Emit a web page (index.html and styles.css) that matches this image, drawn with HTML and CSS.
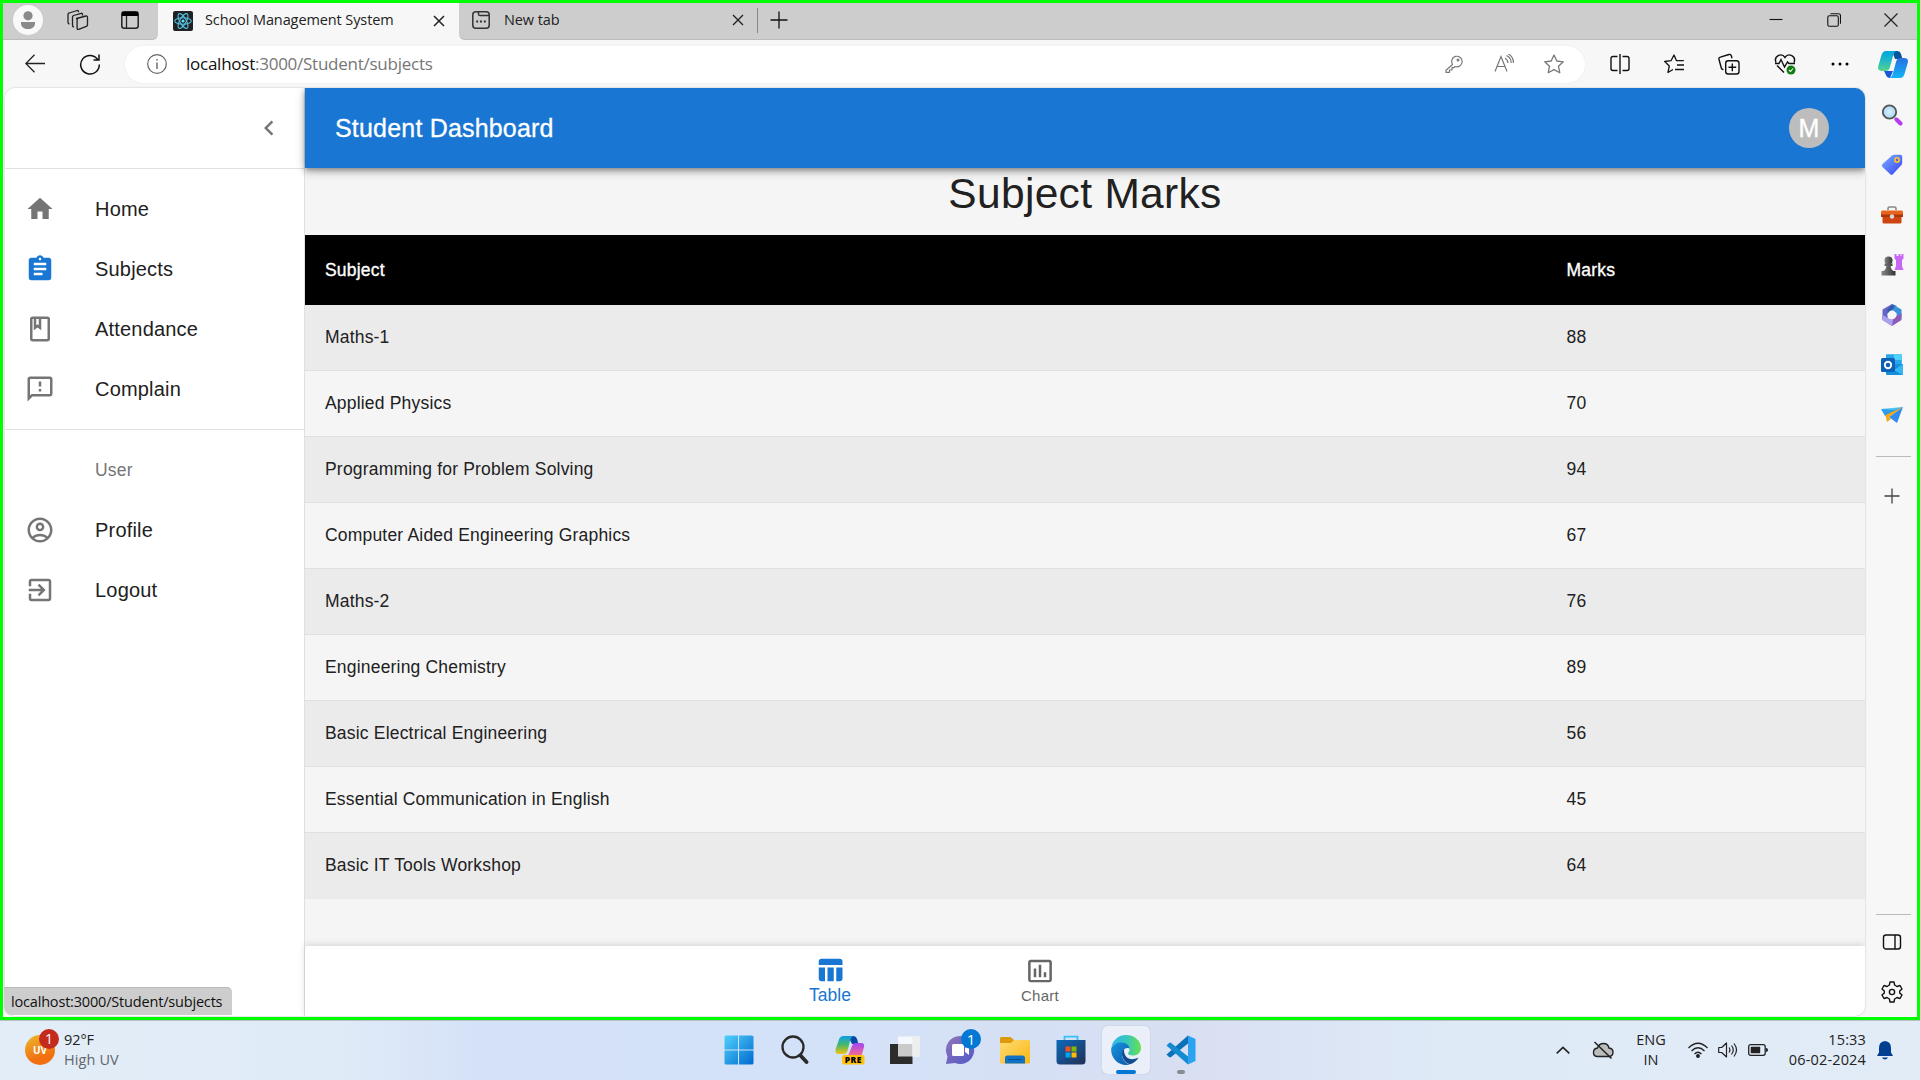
FILE: index.html
```html
<!DOCTYPE html>
<html lang="en">
<head>
<meta charset="utf-8">
<title>School Management System</title>
<link rel="stylesheet" href="styles.css">
</head>
<body>
<div class="window">
  <header class="titlebar">
    <div class="tab-tools">
      <svg class="person" viewBox="0 0 30 30"><circle cx="15" cy="15" r="15" fill="#f9f9f9"/><circle cx="15" cy="10.8" r="4.6" fill="#8a8a8a"/><path d="M8 17h14v1.500c0 3.500-3 5.500-7 5.500s-7-2-7-5.500z" fill="#8a8a8a"/></svg>
      <svg class="i22" viewBox="0 0 22 22" fill="none" stroke="#222" stroke-width="1.300" stroke-linejoin="round"><path d="M9.500 9.500 19 7q1.500-.3 1.500 1.200v7.500q0 1.200-1.200 1.600l-7.600 3q-1.600.6-1.600-1V10.800q0-1 1-1.300z"/><path d="M15.500 6.500V5.300q0-1.300-1.300-1L6.700 6.500q-1.200.4-1.200 1.700v8.300q0 1.300 1.500 1.500"/><path d="M11.500 3.300V2.500q0-1.200-1.300-1L2.200 4Q1 4.300 1 5.700v7.500q0 1.500 1.500 1.800"/></svg>
      <svg class="i18" viewBox="0 0 18 18"><rect x=".8" y=".8" width="16.400" height="16.400" rx="2.500" fill="none" stroke="#222" stroke-width="1.500"/><path d="M1 1h16v4H1z"/><path d="M5.500 5v12" stroke="#222" stroke-width="1.300"/></svg>
    </div>
    <div class="tab active">
      <svg class="i20" viewBox="0 0 20 20"><rect width="20" height="20" rx="2" fill="#202124"/><g fill="none" stroke="#53c1de" stroke-width="1.100"><ellipse cx="10" cy="10" rx="8.300" ry="3.200"/><ellipse cx="10" cy="10" rx="8.300" ry="3.200" transform="rotate(60 10 10)"/><ellipse cx="10" cy="10" rx="8.300" ry="3.200" transform="rotate(120 10 10)"/></g><circle cx="10" cy="10" r="1.600" fill="#61dafb"/></svg>
      <span class="tab-title t-school">School Management System</span>
      <svg class="i12" viewBox="0 0 12 12"><path d="M1 1l10 10M11 1 1 11" stroke="#222" stroke-width="1.500"/></svg>
    </div>
    <div class="tab idle">
      <svg class="i18" viewBox="0 0 18 18" fill="none" stroke="#333" stroke-width="1.500"><rect x=".8" y=".8" width="16.400" height="16.400" rx="3"/><path d="M6.500 1v2q0 1.600 1.600 1.600H17"/><path d="M4.200 10.500h2M8 10.500h2M11.800 10.500h2" stroke-width="2"/></svg>
      <span class="tab-title t-new">New tab</span>
      <svg class="i12" viewBox="0 0 12 12"><path d="M1 1l10 10M11 1 1 11" stroke="#222" stroke-width="1.400"/></svg>
    </div>
    <span class="tab-sep"></span>
    <svg class="i18 plus" viewBox="0 0 18 18"><path d="M9 .5v17M.5 9h17" stroke="#111" stroke-width="1.300"/></svg>
    <div class="controls">
      <svg viewBox="0 0 14 14"><path d="M.5 6.500h13" stroke="#111" stroke-width="1.100"/></svg>
      <svg viewBox="0 0 14 14" fill="none" stroke="#111" stroke-width="1.100"><rect x=".8" y="2.700" width="10.500" height="10.500" rx="1.500"/><path d="M3.500.7h8q2 0 2 2v8"/></svg>
      <svg viewBox="0 0 14 14"><path d="M.5.5l13 13M13.500.5l-13 13" stroke="#222" stroke-width="1.200"/></svg>
    </div>
  </header>

  <div class="toolbar">
    <div class="nav-tools">
      <svg class="i20" viewBox="0 0 20 20" fill="none" stroke="#222" stroke-width="1.300"><path d="M20 9.500H.8M9.500.8.8 9.500l8.700 8.700"/></svg>
      <svg class="i22" viewBox="0 0 22 22" fill="none" stroke="#111" stroke-width="1.500"><path d="M19 7a9.300 9.300 0 1 0 1.300 4.500M20 1.500V7h-5.500"/></svg>
    </div>
    <div class="address">
      <svg class="i20" viewBox="0 0 20 20" fill="none" stroke="#666" stroke-width="1.200"><circle cx="10" cy="10" r="9.300"/><path d="M10 8.500v6.500M10 5v1.600" stroke-width="1.400"/></svg>
      <span class="url"><b>localhost</b>:3000/Student/subjects</span>
      <div class="address-tools">
        <svg class="i18" viewBox="0 0 18 18" fill="none" stroke="#777" stroke-width="1.200" stroke-linejoin="round"><path d="M7.500 9.500 1 15.200V17.300h3.500V15H7v-2.300h2l1-1.200a5.300 5.300 0 1 0-2.500-2z"/><circle cx="13" cy="5" r=".9"/></svg>
        <svg class="i20" viewBox="0 0 20 20" fill="none" stroke="#777" stroke-width="1.200"><path d="M1 17.500 7 2.500l6 15M3 12.500h8M11 4q2.500 1.500 3 5M12.500 1.500Q17 3.500 17.300 9M14.500 0Q19.500 3 19.500 9"/></svg>
        <svg class="i20" viewBox="0 0 20 20" fill="none" stroke="#777" stroke-width="1.300" stroke-linejoin="round"><path d="m10 1 2.800 6 6.500.8-4.800 4.500 1.300 6.500L10 15.600l-5.800 3.200 1.300-6.500L.7 7.800 7.200 7z"/></svg>
      </div>
    </div>
    <div class="bar-tools">
      <svg class="i20" viewBox="0 0 20 20" fill="none" stroke="#111" stroke-width="1.400"><path d="M7.500 2.500H3q-2 0-2 2v10q0 2 2 2h4.500M12.500 2.500H17q2 0 2 2v10q0 2-2 2h-4.500M10 0v20"/></svg>
      <svg class="i20" viewBox="0 0 20 20" fill="none" stroke="#111" stroke-width="1.300" stroke-linejoin="round"><path d="M9 15.500l-5 3 1.300-6.500L.7 7.500l6.300-.8L10 1l2.500 5.700h7.300M13 11h7M11 15.500h9"/></svg>
      <svg class="i22" viewBox="0 0 22 22" fill="none" stroke="#111" stroke-width="1.400" stroke-linejoin="round"><rect x="7.700" y="7.700" width="13.300" height="13.300" rx="2.500"/><path d="M14.300 10.500v7.700M10.500 14.300h7.700M5.500 16.500q-1.700.2-2.200-1.500L1 6.500q-.5-1.800 1.300-2.300L11 1.500q1.800-.5 2.300 1.300l.7 2.500"/></svg>
      <svg class="i22" viewBox="0 0 22 22" fill="none" stroke="#111" stroke-width="1.400"><path d="M2 9.500C-.5 3.500 7.500-1 11 4.500 14.500-1 22.500 3.500 20 9.500M3 12.500l7 7M1 10.500h4l2-4 3.500 7.500 3-5 1.500 1.500h6"/><circle cx="17" cy="17" r="4.500" fill="#107c10" stroke="none"/><path d="m15 17 1.500 1.500 2.500-3" stroke="#fff" stroke-width="1.100"/></svg>
      <svg class="i20" viewBox="0 0 20 20"><circle cx="3" cy="10" r="1.500"/><circle cx="10" cy="10" r="1.500"/><circle cx="17" cy="10" r="1.500"/></svg>
    </div>
    <svg class="copilot" viewBox="0 0 30 27"><defs><linearGradient id="ca" x1="0" y1="0" x2="0" y2="1"><stop offset="0" stop-color="#00a5e0"/><stop offset=".5" stop-color="#22b8c4"/><stop offset="1" stop-color="#56d68a"/></linearGradient><linearGradient id="cb" x1="0" y1="0" x2="0" y2="1"><stop offset="0" stop-color="#2870e0"/><stop offset="1" stop-color="#12b4f8"/></linearGradient></defs><path d="M14 0h5q3 0 4 3l1.500 5H17z" fill="#07549c"/><path d="M6 20h9l-3 7q-3 0-4-3z" fill="#1658d8"/><path d="M8 0h10q-2 1-3 5l-3 11q-1 4-4 4H4q-5 0-3.700-5L3.500 4Q4.700 0 8 0z" fill="url(#ca)"/><path d="M22 7h4q5 0 3.700 5l-3.200 11q-1.200 4-4.500 4H12q2-1 3-5l3-11q1-4 4-4z" fill="url(#cb)"/></svg>
  </div>

  <div class="workarea">
    <div class="page">
      <aside class="drawer">
        <div class="drawer-head"><svg class="mi" viewBox="0 0 24 24"><path d="M15.410 7.410 14 6l-6 6 6 6 1.410-1.410L10.830 12z"/></svg></div>
        <nav class="menu">
          <a class="item"><svg class="mi" viewBox="0 0 24 24"><path d="M10 20v-6h4v6h5v-8h3L12 3 2 12h3v8z"/></svg><span>Home</span></a>
          <a class="item on"><svg class="mi" viewBox="0 0 24 24"><path d="M19 3h-4.180C14.400 1.840 13.300 1 12 1c-1.300 0-2.400.84-2.820 2H5c-1.100 0-2 .9-2 2v14c0 1.100.9 2 2 2h14c1.100 0 2-.9 2-2V5c0-1.100-.9-2-2-2zm-7 0c.55 0 1 .45 1 1s-.45 1-1 1-1-.45-1-1 .45-1 1-1zm2 14H7v-2h7v2zm3-4H7v-2h10v2zm0-4H7V7h10v2z"/></svg><span>Subjects</span></a>
          <a class="item"><svg class="mi" viewBox="0 0 24 24"><path d="M18 2H6c-1.100 0-2 .9-2 2v16c0 1.100.9 2 2 2h12c1.100 0 2-.9 2-2V4c0-1.100-.9-2-2-2zM9 4h2v5l-1-.75L9 9V4zm9 16H6V4h1v9l3-2.250L13 13V4h5v16z"/></svg><span>Attendance</span></a>
          <a class="item"><svg class="mi" viewBox="0 0 24 24"><path d="M20 2H4c-1.100 0-1.990.9-1.990 2L2 22l4-4h14c1.100 0 2-.9 2-2V4c0-1.100-.9-2-2-2zm0 14H5.170l-.59.59-.58.58V4h16v12zm-9-4h2v2h-2zm0-6h2v4h-2z"/></svg><span>Complain</span></a>
          <hr>
          <div class="subhead">User</div>
          <a class="item"><svg class="mi" viewBox="0 0 24 24"><path d="M12 2C6.480 2 2 6.480 2 12s4.480 10 10 10 10-4.480 10-10S17.520 2 12 2zM7.350 18.500C8.660 17.560 10.260 17 12 17s3.340.56 4.650 1.500C15.340 19.440 13.740 20 12 20s-3.340-.56-4.650-1.500zm10.790-1.380C16.450 15.800 14.320 15 12 15s-4.450.8-6.140 2.120C4.700 15.730 4 13.950 4 12c0-4.420 3.580-8 8-8s8 3.580 8 8c0 1.950-.7 3.730-1.860 5.120zM12 6c-1.930 0-3.500 1.570-3.500 3.500S10.070 13 12 13s3.500-1.570 3.500-3.500S13.930 6 12 6zm0 5c-.83 0-1.500-.67-1.500-1.500S11.170 8 12 8s1.500.67 1.500 1.500S12.830 11 12 11z"/></svg><span>Profile</span></a>
          <a class="item"><svg class="mi" viewBox="0 0 24 24"><path d="M10.090 15.590 11.500 17l5-5-5-5-1.410 1.410L12.670 11H3v2h9.670l-2.580 2.590zM19 3H5c-1.110 0-2 .9-2 2v4h2V5h14v14H5v-4H3v4c0 1.100.89 2 2 2h14c1.100 0 2-.9 2-2V5c0-1.100-.9-2-2-2z"/></svg><span>Logout</span></a>
        </nav>
      </aside>
      <main class="main">
        <div class="appbar"><span>Student Dashboard</span><span class="avatar">M</span></div>
        <h1>Subject Marks</h1>
        <div class="table">
          <div class="row head"><span>Subject</span><span>Marks</span></div>
          <div class="row"><span>Maths-1</span><span>88</span></div>
          <div class="row"><span>Applied Physics</span><span>70</span></div>
          <div class="row"><span>Programming for Problem Solving</span><span>94</span></div>
          <div class="row"><span>Computer Aided Engineering Graphics</span><span>67</span></div>
          <div class="row"><span>Maths-2</span><span>76</span></div>
          <div class="row"><span>Engineering Chemistry</span><span>89</span></div>
          <div class="row"><span>Basic Electrical Engineering</span><span>56</span></div>
          <div class="row"><span>Essential Communication in English</span><span>45</span></div>
          <div class="row"><span>Basic IT Tools Workshop</span><span>64</span></div>
        </div>
        <div class="bottom-nav">
          <a class="bn on"><svg class="mi" viewBox="0 0 24 24"><path d="M10 10.020h5V21h-5V10.020zM17 21h3c1.100 0 2-.9 2-2v-9h-5v11zm3-18H5c-1.100 0-2 .9-2 2v3h19V5c0-1.100-.9-2-2-2zM3 19c0 1.100.9 2 2 2h3V10H3v9z"/></svg><span>Table</span></a>
          <a class="bn"><svg class="mi" viewBox="0 0 24 24"><path d="M9 17H7v-7h2v7zm4 0h-2V7h2v10zm4 0h-2v-4h2v4zm2.500 2.100h-15V5h15v14.100zm0-16.100h-15c-1.100 0-2 .9-2 2v14c0 1.100.9 2 2 2h15c1.100 0 2-.9 2-2V5c0-1.100-.9-2-2-2z"/></svg><span>Chart</span></a>
        </div>
      </main>
    </div>
    <aside class="rail">
      <i><svg class="i22" viewBox="0 0 22 22"><defs><radialGradient id="mg"><stop offset="0" stop-color="#d8f0ff"/><stop offset="1" stop-color="#a9d8f5"/></radialGradient></defs><path d="m14 14 2 2" stroke="#777" stroke-width="2"/><path d="m15.500 15.500 4 4" stroke="#b63bf3" stroke-width="4" stroke-linecap="round"/><circle cx="8.500" cy="8" r="6.700" fill="url(#mg)" stroke="#555" stroke-width="1.800"/></svg></i>
      <i><svg class="i22" viewBox="0 0 22 22"><defs><linearGradient id="tg" x1="0" y1="0" x2="1" y2="1"><stop offset="0" stop-color="#78b5ff"/><stop offset="1" stop-color="#3a3cf5"/></linearGradient></defs><path d="M11 1.500Q12 .8 13 .8h6.500q1.700 0 1.700 1.700V9q0 1-.8 2l-8.500 9.300q-1.300 1.200-2.600 0L1.500 13Q0 11.500 1.500 10z" fill="url(#tg)"/><circle cx="16" cy="6" r="2.200" fill="#5a68e8" stroke="#ffc928" stroke-width="1.600"/></svg></i>
      <i><svg class="i24" viewBox="0 0 24 24"><path d="M8 7V5.500Q8 4 9.500 4h5Q16 4 16 5.500V7" fill="none" stroke="#888" stroke-width="1.600"/><path d="M1 9q0-1.500 1.500-1.500h19Q23 7.500 23 9v4H1z" fill="#e8641c"/><path d="M2.500 13h19v6q0 1.500-1.500 1.500H4Q2.500 20.500 2.500 19z" fill="#cf4510"/><path d="M1 11.500h22v2.500H1z" fill="#a9360c"/><circle cx="12" cy="13.500" r="2.200" fill="#d8d8d8"/></svg></i>
      <i><svg class="i24" viewBox="0 0 24 24"><defs><linearGradient id="pg" x1="0" x2="1"><stop offset="0" stop-color="#888"/><stop offset="1" stop-color="#333"/></linearGradient></defs><path d="M14.500 1h2v2h2V1h2v2h1V1H23.500v4.500L22 7v6l1.500 4h-9L16 13V7l-1.500-1.500z" fill="#c866f5"/><circle cx="8.500" cy="7.500" r="4" fill="url(#pg)"/><path d="M4.500 10.500h8V13h-1.800q0 3.500 3 5H15.500v4.500h-14V18h1.800q3-1.500 3-5H4.500z" fill="url(#pg)"/></svg></i>
      <i><svg class="i22" viewBox="0 0 22 22"><path d="M11 0 1.500 5.500V15L7 18.500 6.500 9l9.500-7z" fill="#6765c8"/><path d="M11 0l9.500 5.500V14l-5-1.500V9L9 5.500z" fill="#3a92dc"/><path d="m6.500 5.500 4.500-5 3 1.700L10 7.500 6.500 10z" fill="#315bad"/><path d="M20.500 9v7L11 22l-9.500-6V12l6.500 4 7.500-4z" fill="#8c5bb8"/><path d="M1.500 11v5l9.500 6 1-6-5-2z" fill="#a8a2ef"/><circle cx="11" cy="11" r="4.400" fill="#f7f7f7"/></svg></i>
      <i><svg class="i22" viewBox="0 0 22 22"><path d="M5 1q0-.8.8-.8H20q.8 0 .8.800v9H5z" fill="#28a8ea"/><path d="M13 .2h7q.8 0 .8.800v5H13z" fill="#50d0ff"/><path d="M5 10h17v10q0 1-1 1H6q-1 0-1-1z" fill="#1490df"/><path d="m22 10-9 6 8.500 5q.5 0 .5-1z" fill="#35b8f1"/><rect y="4" width="14" height="14" rx="1.500" fill="#0a62b8"/><circle cx="7" cy="11" r="3.200" fill="none" stroke="#fff" stroke-width="1.900"/></svg></i>
      <i><svg class="i22" viewBox="0 0 22 22"><path d="M0 5 22 3 13 9.500z" fill="#4ac5f5"/><path d="m0 5 13 1L22 3 4 12z" fill="#2d9ce8"/><path d="m22 3-6 16-8-6z" fill="#2f8bee"/><path d="M22 3 4.500 11l1.500 7 4-3-2-2z" fill="#f5a613"/></svg></i>
      <hr>
      <i class="rail-plus"><svg viewBox="0 0 16 16"><path d="M8 .5v15M.5 8h15" stroke="#444" stroke-width="1.300"/></svg></i>
      <hr class="low">
      <i><svg class="i20" viewBox="0 0 20 20" fill="none" stroke="#111" stroke-width="1.400"><rect x="1.500" y="3" width="17" height="14" rx="2.500"/><path d="M13 3v14"/></svg></i>
      <i><svg class="i22" viewBox="0 0 22 22" fill="none" stroke="#111" stroke-width="1.400" stroke-linejoin="round"><circle cx="11" cy="11" r="2.600"/><path d="m9 1-.6 3L6 5.500 3 4.500 1 8l2.300 2v2L1 14l2 3.500 3-1L8.400 18l.6 3h4l.6-3 2.400-1.500 3 1 2-3.500-2.300-2v-2L21 8l-2-3.500-3 1L13.600 4 13 1z"/></svg></i>
    </aside>
  </div>
  <div class="status">localhost:3000/Student/subjects</div>
</div>

<footer class="taskbar">
  <div class="weather">
    <span class="uv">UV<em>1</em></span>
    <span class="wtext"><span>92°F</span><span class="dim">High UV</span></span>
  </div>
  <div class="apps">
    <i><svg viewBox="0 0 30 30"><defs><linearGradient id="wg" x1="0" y1="0" x2="1" y2="1"><stop offset="0" stop-color="#4fd0fb"/><stop offset="1" stop-color="#0069cf"/></linearGradient></defs><path d="M.5 2q0-1.500 1.500-1.500h12v14H.5zM15 .5h13q1.500 0 1.500 1.500v12.500H15zM.5 15.500H14v14H2Q.5 29.500.5 28zM15 15.500h14.500V28q0 1.500-1.500 1.500H15z" fill="url(#wg)"/></svg></i>
    <i><svg viewBox="-1 0 30 30" fill="none" stroke="#2a2a2a"><circle cx="13" cy="12" r="10.500" stroke-width="2.300"/><path d="m20.500 20.500 6 6.500" stroke-width="3.800" stroke-linecap="round"/></svg></i>
    <i><svg class="pre-icon" viewBox="-1 0 31 30"><defs><linearGradient id="pa" x1="0" y1="0" x2="0" y2="1"><stop offset="0" stop-color="#0a9fe8"/><stop offset=".5" stop-color="#4bb86a"/><stop offset="1" stop-color="#f2c40c"/></linearGradient><linearGradient id="pb" x1="0" y1="0" x2="0" y2="1"><stop offset="0" stop-color="#a148f5"/><stop offset="1" stop-color="#fb6b8b"/></linearGradient></defs><path d="M13 1h5q3 0 4 3l1.500 5H17z" fill="#0a48a8"/><path d="M8.500 1H18q-2 1-3 5l-2.500 10q-1 3-4 3H4q-4.500 0-3.300-5L4 4.500Q5 1 8.500 1z" fill="url(#pa)"/><path d="M21 8h5q4 0 3 4l-2.500 9H13l4-10q1-3 4-3z" fill="url(#pb)"/><rect x="7" y="20" width="22.500" height="9.500" rx="2" fill="#ffc20e"/><text x="18.300" y="28" text-anchor="middle" class="pre">PRE</text></svg></i>
    <i><svg viewBox="0 0 30 30"><path d="M0 9h22.500v20H0z" fill="#2c2c2c"/><path d="M8 1.500h22v20H8z" fill="#fff" fill-opacity=".75"/><path d="M22.500 1.500H30v20h-7.500z" fill="#eee"/></svg></i>
    <i class="badged"><svg viewBox="0 0 30 30"><defs><linearGradient id="tm" x1="0" y1="0" x2="1" y2="1"><stop offset="0" stop-color="#9275b8"/><stop offset="1" stop-color="#5059c9"/></linearGradient></defs><path d="M15 1a14 14 0 1 1-5 27L1 29l1.500-7.500A14 14 0 0 1 15 1z" fill="url(#tm)"/><rect x="7" y="9" width="12" height="12" rx="1.500" fill="#fff"/><path d="m20 13 4-3v10l-4-3z" fill="#fff"/></svg><em>1</em></i>
    <i><svg viewBox="0 0 30 30"><defs><linearGradient id="fg" x1="0" y1="0" x2="1" y2="1"><stop offset="0" stop-color="#ffdc73"/><stop offset="1" stop-color="#fbb614"/></linearGradient></defs><path d="M0 3.500Q0 2 1.500 2h9L14 5h4v6H0z" fill="#dd9a0a"/><path d="M0 8h11l3-3h14.500Q30 5 30 6.500V27q0 1.500-1.500 1.500h-27Q0 28.500 0 27z" fill="url(#fg)"/><path d="M5 28.500V23q0-2.500 2.500-2.500h15Q25 20.500 25 23v5.500z" fill="#1072c4"/><path d="M8.500 24.500h13" stroke="#084f92"/></svg></i>
    <i><svg viewBox="0 0 30 30"><defs><linearGradient id="sg" x1="0" y1="0" x2="1" y2="1"><stop offset="0" stop-color="#0c6abb"/><stop offset="1" stop-color="#232f55"/></linearGradient></defs><path d="M8.500 6V1.700h13V6" fill="none" stroke="#33c4f5" stroke-width="1.800"/><path d="M.5 5h29v21q0 3.500-3.500 3.500H4Q.5 29.500.5 26z" fill="url(#sg)"/><path d="M9.500 11.500h5v5h-5z" fill="#f25022"/><path d="M15.500 11.500h5v5h-5z" fill="#7fba00"/><path d="M9.500 17.500h5v5h-5z" fill="#00a4ef"/><path d="M15.500 17.500h5v5h-5z" fill="#ffb900"/></svg></i>
    <i class="active-app"><svg viewBox="0 0 30 30"><defs><linearGradient id="eg" x1="0" x2="1"><stop offset="0" stop-color="#2fb8e8"/><stop offset=".5" stop-color="#35c6c0"/><stop offset="1" stop-color="#67e24a"/></linearGradient><linearGradient id="eb" x1="0" y1="0" x2="1" y2="1"><stop offset="0" stop-color="#1595e0"/><stop offset="1" stop-color="#0c58a8"/></linearGradient></defs><path d="M.5 12C2 4.500 8 0 15 0c9 0 15 6 15 13 0 5-4 7.500-8 7.500-3 0-5-1-5-2 0-1 1.500-1.500 1.500-4C18.500 11 14 8 9.500 8S2 10 .5 12z" fill="url(#eg)"/><path d="M.3 13C2 9.500 6 7.500 10 7.500c5 0 8.500 3 8.500 6-4-2-7.500 2-7.500 6 0 5 3.500 9 8 10C8 32-1 23 .3 13z" fill="url(#eb)"/><path d="M13 14c-2 1.500-2 3-2 5 0 5 4 9.500 8 10.300 4-1.100 7-3.800 8.500-6.800-8 4-15 .5-14.500-8.500z" fill="#104c92"/></svg></i>
    <i class="open-app"><svg viewBox="0 0 30 30"><path d="M22 .5 29.500 4v22L22 29.500z" fill="#2ba3f0"/><path d="M22 .5v8L4.500 22.500 3 22 .5 19.500z" fill="#0b72b8"/><path d="M.5 10.500 3 8l1.500-.5L22 21.500v8z" fill="#148ad2"/></svg></i>
  </div>
  <div class="tray">
    <svg class="t-chev" viewBox="0 0 14 8"><path d="m.7 7.300 6.300-6 6.300 6" fill="none" stroke="#222" stroke-width="1.600"/></svg>
    <svg class="t-cloud" viewBox="0 0 22 18"><path d="M5.500 15.500q-4 0-4-4T5.500 7Q7 2.500 11.500 2.500T17 7q4 .5 4 4.300t-4 4.200z" fill="#bdbdbd" stroke="#222" stroke-width="1.400"/><path d="m2.500 1 17 16.500" stroke="#222" stroke-width="1.500"/></svg>
    <span class="lang"><span>ENG</span><span>IN</span></span>
    <svg class="t-wifi" viewBox="0 0 20 16" fill="none" stroke="#222" stroke-width="1.300"><path d="M.5 6q9.500-9.500 19 0M3.500 9q6.500-6.500 13 0M6.500 12q3.500-3.500 7 0"/><circle cx="10" cy="14" r="1.300" fill="#222"/></svg>
    <svg class="t-vol" viewBox="0 0 20 16" fill="none" stroke="#222" stroke-width="1.200" stroke-linejoin="round"><path d="M.7 5.500h3L8.500 1v14l-4.800-4.500h-3zM11 5.500q1.800 2.500 0 5M13.500 3.500q3.500 4.500 0 9M16 1.500q5 6.500 0 13"/></svg>
    <svg class="t-bat" viewBox="0 0 20 12"><rect x=".7" y=".7" width="16.500" height="10.600" rx="2" fill="none" stroke="#222" stroke-width="1.300"/><rect x="2.700" y="2.700" width="9.500" height="6.600" rx=".7" fill="#222"/><path d="M18 4q2 0 2 2t-2 2z" fill="#222"/></svg>
    <span class="clock"><span>15:33</span><span>06-02-2024</span></span>
    <svg class="t-bell" viewBox="0 0 16 19"><path d="M8 0Q2 .5 2 7v4.500L.3 14.200V15h15.400v-.8L14 11.500V7Q14 .5 8 0zM5 16.500h6q-1 2-3 2t-3-2z" fill="#003e92"/></svg>
  </div>
</footer>
</body>
</html>
```
FILE: styles.css
```css
* { box-sizing: border-box; }
body { margin: 0; width: 1920px; height: 1080px; overflow: hidden; display: flex; flex-direction: column; font-family: "Liberation Sans", Arial, sans-serif; color: #212121; }
svg { display: block; flex: none; }
i, em { font-style: normal; }
hr { border: 0; margin: 0; }
.i12 { width: 12px; height: 12px; }
.i18 { width: 18px; height: 18px; }
.i20 { width: 20px; height: 20px; }
.i22 { width: 22px; height: 22px; }
.i24 { width: 24px; height: 24px; }

/* browser window */
.window { position: relative; height: 1020px; border: 3px solid #00ff00; background: #f7f7f7; display: flex; flex-direction: column; font-family: "Open Sans", "Noto Sans", sans-serif; }
.titlebar { height: 37px; background: #f7f7f7; display: flex; align-items: stretch; }
.tab-tools { width: 155px; background: #cdcdcd; border-bottom: 1px solid #bbb; border-bottom-right-radius: 6px; display: flex; align-items: center; padding: 0 0 2px 10px; }
.person { width: 30px; height: 30px; margin-right: 24px; }
.tab-tools .i22 { margin-right: 32px; }
.tab { display: flex; align-items: center; padding-bottom: 2px; font-size: 14.500px; color: #222; }
.tab-title { flex: 1; white-space: nowrap; padding-bottom: 2px; }
.tab.active { width: 301px; padding-left: 15px; padding-right: 14px; }
.tab.active .tab-title { margin-left: 12px; }
.t-school { letter-spacing: -.1px; }
.tab.idle { width: 297px; background: #cdcdcd; border-bottom: 1px solid #bbb; border-bottom-left-radius: 6px; padding-left: 13px; padding-right: 12px; }
.tab.idle .tab-title { margin-left: 14px; letter-spacing: -.1px; }
.tab-sep { width: 5px; background: #cdcdcd linear-gradient(#888, #888) 1px 5px / 1px 25px no-repeat; border-bottom: 1px solid #bbb; }
.plus { height: auto; width: 36px; padding: 0 9px 2px; background: #cdcdcd; border-bottom: 1px solid #bbb; }
.controls { flex: 1; background: #cdcdcd; border-bottom: 1px solid #bbb; display: flex; align-items: center; justify-content: flex-end; gap: 43.500px; padding: 0 19px 3px 0; }
.controls svg { width: 14px; height: 14px; }

.toolbar { height: 48px; display: flex; align-items: center; }
.nav-tools { width: 122px; display: flex; align-items: center; gap: 34px; padding-left: 22px; }
.address { width: 1460px; height: 37px; border-radius: 19px; background: #fff; box-shadow: 0 0 3px rgba(0,0,0,.06); display: flex; align-items: center; padding: 0 21px 0 22px; }
.url { margin-left: 19px; padding-bottom: 2px; flex: 1; font-size: 17px; color: #767676; letter-spacing: -.25px; }
.url b { font-weight: 400; color: #111; }
.address-tools { display: flex; align-items: center; gap: 30px; }
.address-tools .i18 { margin-right: 1px; }
.bar-tools { width: 290px; display: flex; align-items: center; justify-content: space-between; padding: 0 25px 0 25px; }
.copilot { width: 30px; height: 27px; margin-left: 3px; }

.workarea { flex: 1; display: flex; min-height: 0; }
.page { width: 1860px; height: 928px; margin-left: 2px; display: flex; background: #f5f5f5; border-radius: 10px; overflow: hidden; box-shadow: 0 0 2px rgba(0,0,0,.25); font-family: "Liberation Sans", Arial, sans-serif; }

/* navigation drawer */
.drawer { width: 300px; background: #fff; border-right: 1px solid #e0e0e0; }
.drawer-head { height: 81px; border-bottom: 1px solid #e0e0e0; display: flex; align-items: center; justify-content: flex-end; padding-right: 20px; }
.mi { width: 30px; height: 30px; fill: #757575; }
.menu { padding-top: 10px; }
.item { height: 60px; display: flex; align-items: center; padding-left: 20px; font-size: 20px; letter-spacing: .19px; }
.item span { margin-left: 40px; }
.item.on .mi { fill: #1976d2; }
.menu hr { height: 1px; background: #e0e0e0; margin: 10px 0; }
.subhead { height: 60px; line-height: 60px; padding-left: 90px; font-size: 17.500px; letter-spacing: .19px; color: #757575; }

/* content */
.main { flex: 1; display: flex; flex-direction: column; }
.appbar { height: 80px; flex: none; background: #1976d2; color: #fff; display: flex; align-items: center; justify-content: space-between; padding: 0 36px 0 30px; font-size: 25px; letter-spacing: .19px; box-shadow: 0 2px 5px rgba(0,0,0,.3), 0 5px 8px rgba(0,0,0,.14), 0 1px 12px rgba(0,0,0,.12); -webkit-text-stroke: .3px #fff; }
.avatar { width: 40px; height: 40px; border-radius: 50%; background: #bdbdbd; display: flex; align-items: center; justify-content: center; letter-spacing: 0; }
h1 { margin: 0; height: 67px; font-size: 42.500px; line-height: 52.500px; font-weight: 400; letter-spacing: .31px; text-align: center; }
.row { display: grid; grid-template-columns: 1241.500px 1fr; height: 66px; align-items: center; border-bottom: 1px solid #e0e0e0; font-size: 17.500px; letter-spacing: .19px; }
.row span { padding-left: 20px; }
.row:nth-child(even) { background: #ebebeb; }
.row:last-child { border-bottom-color: #ebebeb; }
.row.head { height: 70px; background: #000; color: #fff; border: 0; -webkit-text-stroke: .35px #fff; }
.bottom-nav { margin-top: auto; height: 70px; background: #fff; display: flex; justify-content: center; padding-right: 300px; box-shadow: 0 -1px 7px rgba(0,0,0,.14); }
.bn { width: 210px; display: flex; flex-direction: column; align-items: center; justify-content: center; color: #666; font-size: 15px; line-height: 20px; letter-spacing: .3px; }
.bn .mi { fill: #666; }
.bn.on { color: #1976d2; font-size: 17.500px; letter-spacing: 0; padding-bottom: 2px; }
.bn.on .mi { fill: #1976d2; }

/* edge sidebar */
.rail { flex: 1; display: flex; flex-direction: column; align-items: center; padding: 2px 0 0 2px; }
.rail i { width: 50px; height: 50px; flex: none; display: flex; align-items: center; justify-content: center; }
.rail hr { width: 35px; height: 1px; background: #bbb; margin: 16px 0 14px 2px; }
.rail .rail-plus svg { width: 16px; height: 16px; }
.rail hr.low { margin: auto 0 2px 2px; }

.status { position: absolute; left: 1px; bottom: 2px; width: 228px; height: 28px; background: #cdcdcd; border-top: 1px solid #bbb; border-radius: 0 5px 0 8px; font-size: 14.500px; line-height: 27px; padding-left: 7px; color: #111; letter-spacing: -.18px; white-space: nowrap; }

/* taskbar */
.taskbar { height: 60px; border-top: 1px solid #b9bfc8; padding-bottom: 1px; background: linear-gradient(90deg, #e2edf7 0, #e0ebf8 340px, #d5e1f7 480px, #d3e2f8 780px, #d8dff2 1180px, #dfeaf7 1450px, #e1ecf7 100%); display: flex; font-family: "Open Sans", "Noto Sans", sans-serif; font-size: 14.500px; line-height: 20px; color: #222; }
.weather { width: 715px; display: flex; align-items: center; padding-left: 25px; }
.uv { position: relative; width: 30px; height: 30px; border-radius: 50%; background: linear-gradient(160deg, #edb82e, #f2700f 70%); color: #fff; font-size: 10px; font-weight: 700; line-height: 30px; text-align: center; }
.uv em { position: absolute; left: 14px; top: -6px; width: 20px; height: 20px; border-radius: 50%; background: #c42b1c; line-height: 20px; font-size: 14px; font-weight: 400; }
.wtext, .lang, .clock { display: flex; flex-direction: column; padding-bottom: 1px; }
.wtext { margin-left: 9px; letter-spacing: -.1px; }
.dim { color: #5f666e; letter-spacing: .1px; }
.apps { display: flex; align-items: center; gap: 7.250px; }
.apps i { position: relative; width: 48px; height: 48px; border-radius: 5px; display: flex; align-items: center; justify-content: center; }
.apps svg { width: 30px; height: 30px; }
.apps .pre-icon { width: 31px; }
.apps em { position: absolute; right: 3px; top: 3px; width: 20px; height: 20px; border-radius: 50%; background: #0078d4; color: #fff; text-align: center; font-size: 15px; line-height: 20px; }
.pre { font: 800 8.500px "Open Sans", sans-serif; letter-spacing: .4px; }
.active-app { background: #ebeff9; box-shadow: 0 0 1px rgba(0,0,0,.3); }
.active-app::after, .open-app::after { content: ""; position: absolute; bottom: 0; left: 14px; width: 20px; height: 4px; border-radius: 2px; background: #0078d4; }
.open-app::after { left: 20px; width: 8px; background: #868b94; }
.tray { flex: 1; display: flex; align-items: center; justify-content: flex-end; padding-right: 27px; }
.t-chev { width: 14px; height: 8px; margin-right: 22px; }
.t-cloud { width: 22px; height: 18px; margin-right: 22px; }
.lang { width: 30px; align-items: center; margin-right: 22px; }
.t-wifi { width: 20px; height: 16px; margin-right: 10px; }
.t-vol { width: 20px; height: 16px; margin-right: 10px; }
.t-bat { width: 20px; height: 12px; margin-right: 20px; }
.clock { width: 78px; align-items: flex-end; margin-right: 11px; white-space: nowrap; letter-spacing: .15px; }
.t-bell { width: 16px; height: 19px; }
```
